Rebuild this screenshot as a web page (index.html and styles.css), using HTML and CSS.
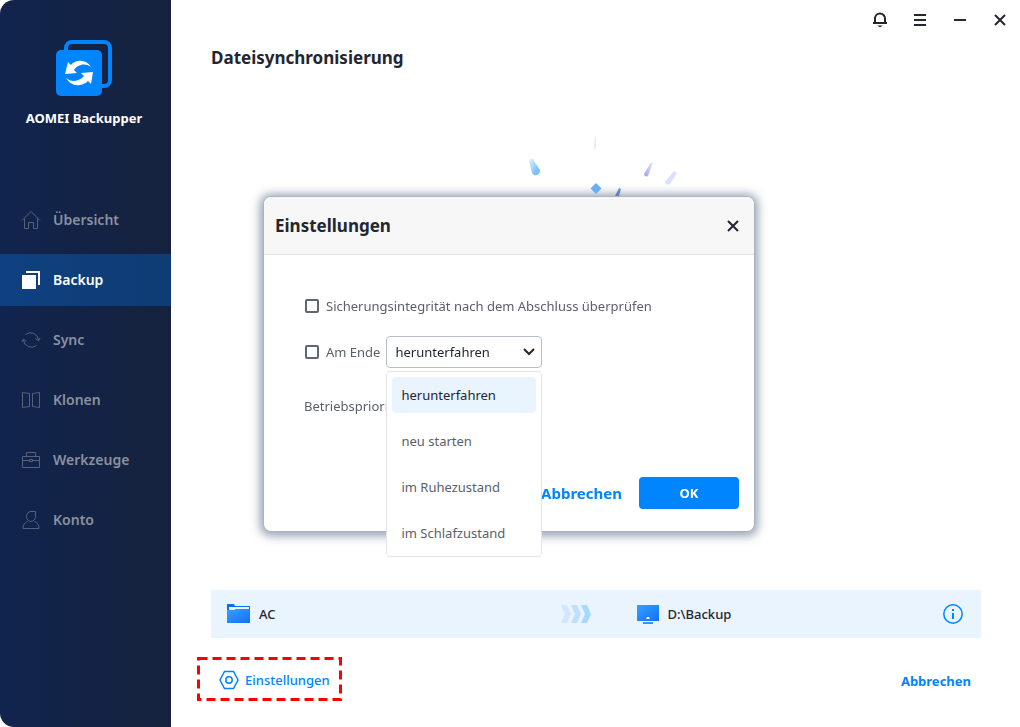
FILE: index.html
```html
<!DOCTYPE html>
<html lang="de">
<head>
    <meta charset="UTF-8">
    <meta name="viewport" content="width=device-width, initial-scale=1.0">
    <title>AOMEI Backupper</title>
    <link rel="stylesheet" href="styles.css">
</head>
<body>
    <aside class="sidebar">
        <div class="brand">
            <svg class="logo" width="56" height="56" viewBox="0 0 56 56">
                <rect x="10" y="2" width="44" height="44" rx="6" fill="none" stroke="#0085ff" stroke-width="4"/>
                <rect x="0" y="10" width="46" height="46" rx="5" fill="#0085ff"/>
                <path d="M35 27C32 22 27 20 22 21c-3 .5-5.500 2-7 4l-3-3-3 12 12-1-3-3c3-5 11-8 17-3z" fill="#fff"/>
                <path d="M10 38c3 5 8 8 14 7 3-.5 6-2 8-4l3 3 2-12-12 1 3 3c-4 5-12 7-18 2z" fill="#fff"/>
            </svg>
            <div class="brand-name">AOMEI Backupper</div>
        </div>
        <nav class="menu">
            <a href="#" class="menu-item">
                <svg width="20" height="20" viewBox="0 0 20 20"><path d="M1 10.500 10 1.500l9 9M3.500 8.500v10h4v-6h5v6h4v-10"/></svg>
                Übersicht
            </a>
            <a href="#" class="menu-item active">
                <svg width="20" height="20" viewBox="0 0 20 20"><path class="solid" d="M1 5h14v14H1zM5 1h14v14h-2V3H5z"/></svg>
                Backup
            </a>
            <a href="#" class="menu-item">
                <svg width="20" height="20" viewBox="0 0 20 20"><path d="M4.500 4.500a8 8 0 0 1 13 5.500M15.500 15.500A8 8 0 0 1 2.500 10M1 12l1.500-3 3 2.500M14.500 8.500l3 2.500 1.500-3"/></svg>
                Sync
            </a>
            <a href="#" class="menu-item">
                <svg width="20" height="20" viewBox="0 0 20 20"><path d="M1.500 2.500 8.500 3.500v13l-7 1zM18.500 2.500l-7 1v13l7 1z"/></svg>
                Klonen
            </a>
            <a href="#" class="menu-item">
                <svg width="20" height="20" viewBox="0 0 20 20"><path d="M1.500 6.500h17v11h-17zM5.500 6.500v-4h9v4M1.500 10.500h7M11.500 10.500h7M8.500 9.500h3v2h-3z"/></svg>
                Werkzeuge
            </a>
            <a href="#" class="menu-item">
                <svg width="20" height="20" viewBox="0 0 20 20"><path d="M14.500 1.500H10a4.500 5 0 1 0 4.500 5zM6.500 11.500c-3 1-4.500 3.500-4.500 7h16c0-3.500-1.500-6-4.500-7"/></svg>
                Konto
            </a>
        </nav>
    </aside>

    <main class="main">
        <div class="titlebar">
            <button class="win-btn" aria-label="Benachrichtigungen">
                <svg width="16" height="16" viewBox="0 0 16 16"><path d="M3 11V6.500a5 5 0 0 1 10 0V11M1 11h14"/><path class="solid" d="M5.500 13.500h5L8 15.500z"/></svg>
            </button>
            <button class="win-btn" aria-label="Menü">
                <svg width="16" height="16" viewBox="0 0 16 16"><path d="M2 3h12M2 8h12M2 13h12"/></svg>
            </button>
            <button class="win-btn" aria-label="Minimieren">
                <svg width="16" height="16" viewBox="0 0 16 16"><path d="M2 8h12"/></svg>
            </button>
            <button class="win-btn" aria-label="Schließen">
                <svg width="16" height="16" viewBox="0 0 16 16"><path d="m3 3 10 10M13 3 3 13"/></svg>
            </button>
        </div>

        <div class="content">
            <h1>Dateisynchronisierung</h1>

            <div class="stage">
                <svg width="170" height="66" viewBox="0 0 170 66">
                    <defs>
                        <linearGradient id="drop" x1="0" y1="0" x2="1" y2="1">
                            <stop offset="0" stop-color="#e8f4ff"/>
                            <stop offset=".7" stop-color="#7cc0fc"/>
                        </linearGradient>
                        <linearGradient id="streak" x1="1" y1="0" x2="0" y2="1">
                            <stop offset="0" stop-color="#e3f3ff"/>
                            <stop offset="1" stop-color="#a09cf8"/>
                        </linearGradient>
                    </defs>
                    <path d="M18 27c1-3 4-3 5 0l6 9c1 4-5 8-8 3z" fill="url(#drop)"/>
                    <path d="M84 3h1v12h-2V9z" fill="#e4f0fd"/>
                    <path d="m140 28 2 1-5 13c-2 1-4 0-4-2z" fill="url(#streak)"/>
                    <path d="m163 37 3 2-7 11c-2 1-5 0-5-2z" fill="#d9dffd"/>
                    <path d="m108 54 2 1-2 7h-4z" fill="#7a95d8"/>
                </svg>
            </div>

            <div class="path-bar">
                <div class="path-side">
                    <svg width="24" height="22" viewBox="0 0 24 22">
                        <defs>
                            <linearGradient id="blue" x1="0" y1="0" x2="1" y2="1">
                                <stop offset="0" stop-color="#36a0ff"/>
                                <stop offset="1" stop-color="#1170f8"/>
                            </linearGradient>
                        </defs>
                        <path d="M0 1h7l1 2h15v17H0z" fill="#0d6ef0"/>
                        <path d="M2 4h20v3H2z" fill="#eaf4ff"/>
                        <path d="M0 7h7l2-1h14v14H0z" fill="url(#blue)"/>
                    </svg>
                    <span>AC</span>
                </div>
                <svg class="arrows" width="30" height="20" viewBox="0 0 30 20">
                    <path d="M0 1h6l4 9-4 9H0l4-9z" fill="#d2e6fd"/>
                    <path d="M10 1h6l4 9-4 9h-6l4-9z" fill="#bfdffe"/>
                    <path d="M20 1h6l4 9-4 9h-6l4-9z" fill="#a6dafe"/>
                </svg>
                <div class="path-side target">
                    <svg width="24" height="22" viewBox="0 0 24 22">
                        <path d="M1 2h22v16H1z" fill="url(#blue)"/>
                        <path d="M10 16l1-2h2l1 2z" fill="#eaf4ff"/>
                        <path d="M7 19h10v2H7z" fill="#3096ff"/>
                    </svg>
                    <span>D:\Backup</span>
                    <button class="info-btn" aria-label="Info">
                        <svg width="20" height="20" viewBox="0 0 20 20"><circle cx="10" cy="10" r="9.200"/><path class="solid" d="M9 5h2v2H9zM9 9h2v6H9z"/></svg>
                    </button>
                </div>
            </div>

            <div class="footer">
                <div class="highlight">
                    <svg class="frame" width="145" height="44" viewBox="0 0 145 44">
                        <rect x="1.500" y="1.500" width="142" height="41"/>
                    </svg>
                    <button class="link-btn settings-btn">
                        <svg width="20" height="20" viewBox="0 0 20 20"><path d="M5.500 1.500h9l4.500 8.500-4.500 8.500h-9L1 10z"/><circle cx="10" cy="10" r="3.200"/></svg>
                        Einstellungen
                    </button>
                </div>
                <button class="link-btn strong">Abbrechen</button>
            </div>
        </div>
    </main>

    <div class="overlay">
        <form class="dialog" role="dialog" aria-labelledby="dialog-title">
            <svg class="spark" width="12" height="12" viewBox="0 0 12 12"><path d="m6 0 5.500 5.500L6 11 .5 5.500z"/></svg>
            <div class="dialog-head">
                <h2 id="dialog-title">Einstellungen</h2>
                <button type="button" class="win-btn" aria-label="Dialog schließen">
                    <svg width="16" height="16" viewBox="0 0 16 16"><path d="m3 3 10 10M13 3 3 13"/></svg>
                </button>
            </div>
            <div class="dialog-body">
                <div class="row">
                    <input type="checkbox" id="verify">
                    <label for="verify">Sicherungsintegrität nach dem Abschluss überprüfen</label>
                </div>
                <div class="row">
                    <input type="checkbox" id="at-end">
                    <label for="at-end">Am Ende</label>
                    <div class="dropdown">
                        <select aria-label="Aktion am Ende">
                            <option>herunterfahren</option>
                            <option>neu starten</option>
                            <option>im Ruhezustand</option>
                            <option>im Schlafzustand</option>
                        </select>
                        <svg class="chevron" width="14" height="10" viewBox="0 0 14 10"><path d="m2 2 5 5 5-5"/></svg>
                        <div class="options">
                            <button type="button" class="option selected">herunterfahren</button>
                            <button type="button" class="option">neu starten</button>
                            <button type="button" class="option">im Ruhezustand</button>
                            <button type="button" class="option">im Schlafzustand</button>
                        </div>
                    </div>
                </div>
                <div class="row priority">Betriebspriorität</div>
            </div>
            <div class="dialog-foot">
                <button type="button" class="link-btn cancel">Abbrechen</button>
                <button type="button" class="ok-btn">OK</button>
            </div>
        </form>
    </div>
</body>
</html>
```
FILE: styles.css
```css
* {
    box-sizing: border-box;
}
body {
    margin: 0;
    min-height: 100vh;
    display: flex;
    background: #fff;
    color: #23262f;
    font-family: "Noto Sans", "Open Sans", sans-serif;
    font-size: 13px;
    line-height: 20px;
}
button, select {
    font: inherit;
    color: inherit;
    border: none;
    background: none;
    padding: 0;
    cursor: pointer;
}
svg {
    display: block;
    flex: none;
}

/* Sidebar */
.sidebar {
    flex: none;
    width: 171px;
    padding-top: 40px;
    background: linear-gradient(90deg, #11244e, #16223d);
    border-radius: 14px 0 0 14px;
}
.brand {
    display: flex;
    flex-direction: column;
    align-items: center;
    gap: 12px;
    padding-right: 3px;
}
.brand-name {
    color: #fff;
    font-weight: 700;
}
.menu {
    display: flex;
    flex-direction: column;
    gap: 8px;
    margin-top: 66px;
}
.menu-item {
    display: flex;
    align-items: center;
    gap: 12px;
    height: 52px;
    padding-left: 21px;
    color: #8a919f;
    font-size: 14px;
    font-weight: 600;
    text-decoration: none;
}
.menu-item svg {
    fill: none;
    stroke: #56627c;
}
.menu-item.active {
    background: linear-gradient(90deg, #0f4080, #0e3c74);
    color: #fff;
}
.menu-item .solid {
    fill: #fff;
    stroke: none;
}

/* Main area */
.main {
    flex: 1;
    display: flex;
    flex-direction: column;
}
.titlebar {
    display: flex;
    justify-content: flex-end;
    height: 40px;
}
.win-btn {
    display: flex;
    align-items: center;
    justify-content: center;
    width: 40px;
    height: 40px;
}
.win-btn svg {
    fill: none;
    stroke: #23262f;
    stroke-width: 2;
}
.win-btn .solid {
    fill: #23262f;
    stroke: none;
}
.content {
    flex: 1;
    display: flex;
    flex-direction: column;
    padding: 6px 39px 26px 40px;
}
h1, h2 {
    margin: 0;
    font-size: 17px;
    font-weight: 700;
    line-height: 24px;
}
.stage {
    flex: 1;
    display: flex;
    justify-content: center;
    padding-top: 64px;
}
.path-bar {
    display: flex;
    align-items: center;
    height: 48px;
    padding: 0 18px 0 16px;
    background: #eaf4ff;
    font-weight: 500;
}
.path-side {
    flex: 1;
    display: flex;
    align-items: center;
    gap: 8px;
}
.arrows {
    margin-left: 6px;
}
.path-side.target {
    padding-left: 45px;
}
.info-btn {
    margin-left: auto;
}
.info-btn svg {
    fill: none;
    stroke: #0085ff;
    stroke-width: 1.500;
}
.info-btn .solid {
    fill: #0085ff;
    stroke: none;
}
.footer {
    display: flex;
    align-items: center;
    justify-content: space-between;
    margin-top: 19px;
    padding-right: 10px;
}
.highlight {
    position: relative;
    display: flex;
    align-items: center;
    width: 145px;
    height: 44px;
    margin-left: -14px;
    padding: 2px 0 0 22px;
}
.frame {
    position: absolute;
    inset: 0;
    fill: none;
    stroke: #f00;
    stroke-width: 3;
    stroke-dasharray: 9 5;
    pointer-events: none;
}
.link-btn {
    color: #0085ff;
    font-weight: 500;
}
.link-btn.strong, .link-btn.cancel {
    font-weight: 700;
}
.link-btn.strong {
    padding-top: 4px;
}
.settings-btn {
    display: flex;
    align-items: center;
    gap: 6px;
}
.settings-btn svg {
    fill: none;
    stroke: #0085ff;
    stroke-width: 1.500;
}

/* Settings dialog */
.overlay {
    position: fixed;
    inset: 0;
    display: flex;
    align-items: center;
    justify-content: center;
    padding-right: 2px;
}
.dialog {
    position: relative;
    width: 492px;
    background: #fff;
    border: 1px solid #a9b3c2;
    border-radius: 8px;
    box-shadow: 0 1px 10px 3px rgba(50, 72, 108, 0.5);
}
.spark {
    position: absolute;
    top: -14px;
    left: 326px;
    fill: #67b0f9;
}
.dialog-head {
    display: flex;
    align-items: center;
    justify-content: space-between;
    height: 58px;
    padding: 2px 1px 0 11px;
    background: #f7f7f8;
    border-bottom: 1px solid #e2e4e6;
    border-radius: 7px 7px 0 0;
}
.dialog-body {
    padding: 35px 40px 0;
    color: #5a5f69;
}
.row {
    display: flex;
    align-items: center;
    height: 32px;
    margin-bottom: 14px;
}
.row input {
    appearance: none;
    width: 14px;
    height: 14px;
    margin: 0 7px 0 1px;
    border: 2px solid #5f6573;
    border-radius: 2px;
    background: #fff;
}
.row.priority {
    margin: 22px 0 0;
}
.dropdown {
    position: relative;
    margin-left: 6px;
    width: 156px;
}
.dropdown select {
    appearance: none;
    display: block;
    width: 100%;
    height: 32px;
    padding: 0 8px;
    border: 1px solid #b9bdcb;
    border-radius: 4px;
    background: #fff;
    color: #23262f;
}
.chevron {
    position: absolute;
    top: 11px;
    right: 6px;
    fill: none;
    stroke: #23262f;
    stroke-width: 2;
    pointer-events: none;
}
.options {
    position: absolute;
    top: 35px;
    left: 0;
    right: 0;
    z-index: 1;
    display: flex;
    flex-direction: column;
    gap: 10px;
    padding: 5px;
    background: #fff;
    border: 1px solid #e2e4e8;
    border-radius: 4px;
}
.option {
    height: 36px;
    padding: 0 9px;
    border-radius: 4px;
    color: #5a5f69;
    text-align: left;
}
.option.selected {
    background: #eaf4ff;
    color: #23262f;
}
.dialog-foot {
    display: flex;
    align-items: center;
    justify-content: flex-end;
    gap: 17px;
    padding: 55px 15px 22px;
}
.link-btn.cancel {
    font-size: 15px;
}
.ok-btn {
    width: 100px;
    height: 32px;
    border-radius: 4px;
    background: #0085ff;
    color: #fff;
    font-weight: 700;
}
```
